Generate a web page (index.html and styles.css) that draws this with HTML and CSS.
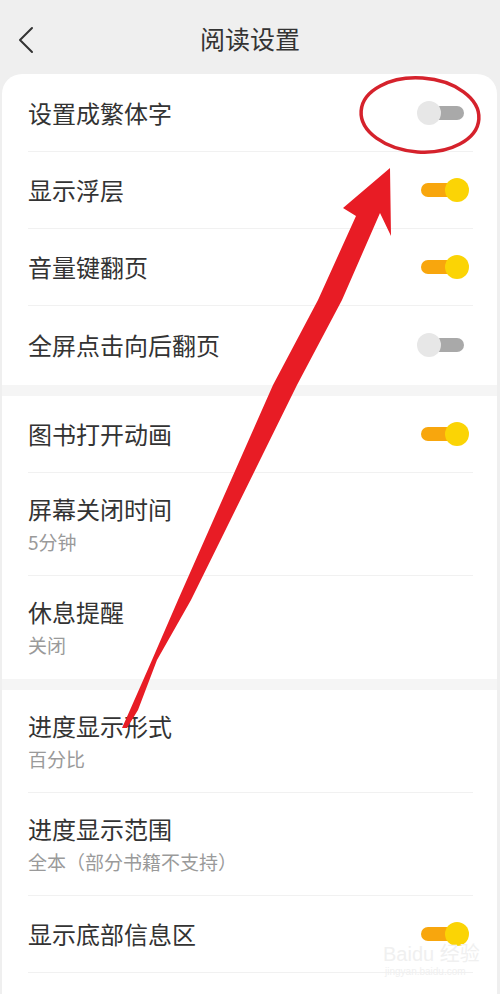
FILE: index.html
```html
<!DOCTYPE html>
<html lang="zh-CN">
<head>
    <meta charset="UTF-8">
    <meta name="viewport" content="width=device-width, initial-scale=1.0">
    <title>阅读设置</title>
    <link rel="stylesheet" href="styles.css">
</head>
<body>

    <div class="page">
        <!-- Top bar -->
        <header class="topbar">
            <span class="back">
                <svg width="16" height="28" viewBox="0 0 16 28">
                    <path d="M14 2 L2 14 L14 26" fill="none" stroke="#333" stroke-width="2" stroke-linecap="round" stroke-linejoin="round"/>
                </svg>
            </span>
            <h1 class="title">阅读设置</h1>
        </header>

        <!-- Group 1 -->
        <section class="group group-first">
            <div class="row">
                <span class="label">设置成繁体字</span>
                <span class="switch"></span>
            </div>
            <div class="row">
                <span class="label">显示浮层</span>
                <span class="switch on"></span>
            </div>
            <div class="row">
                <span class="label">音量键翻页</span>
                <span class="switch on"></span>
            </div>
            <div class="row row-last">
                <span class="label">全屏点击向后翻页</span>
                <span class="switch"></span>
            </div>
        </section>

        <!-- Group 2 -->
        <section class="group">
            <div class="row">
                <span class="label">图书打开动画</span>
                <span class="switch on"></span>
            </div>
            <div class="row row-double">
                <span class="label">屏幕关闭时间</span>
                <span class="sub">5分钟</span>
            </div>
            <div class="row row-double row-last">
                <span class="label">休息提醒</span>
                <span class="sub">关闭</span>
            </div>
        </section>

        <!-- Group 3 -->
        <section class="group group-fill">
            <div class="row row-double">
                <span class="label">进度显示形式</span>
                <span class="sub">百分比</span>
            </div>
            <div class="row row-double">
                <span class="label">进度显示范围</span>
                <span class="sub">全本（部分书籍不支持）</span>
            </div>
            <div class="row">
                <span class="label">显示底部信息区</span>
                <span class="switch on"></span>
            </div>
        </section>

        <!-- Red annotation drawn over the screenshot -->
        <svg class="annotation" width="500" height="994" viewBox="0 0 500 994">
            <ellipse cx="420" cy="115" rx="59" ry="37" transform="rotate(4 420 115)" fill="none" stroke="#d5222c" stroke-width="3.5"/>
            <polygon fill="#e81c25" points="390,168 391,236 380,213 342,300 297,385 191,600 157,660 138,710 127,728 122,728 130,710 152,660 178,600 273,385 318,300 356,216 343,208"/>
        </svg>

        <div class="watermark">
            <span class="wm-logo">Bai<span class="wm-paw">du</span> 经验</span>
            <span class="wm-url">jingyan.baidu.com</span>
        </div>
    </div>

</body>
</html>
```

FILE: styles.css
```css
body {
    margin: 0;
    padding: 0;
    font-family: "Noto Sans CJK SC", "Noto Sans", sans-serif;
    background-color: #efefef;
    color: #333333;
}

.page {
    position: relative;
    width: 500px;
    min-height: 994px;
    display: flex;
    flex-direction: column;
    overflow: hidden;
}

.topbar {
    height: 74px;
    display: flex;
    align-items: center;
    justify-content: center;
    position: relative;
}

.back {
    position: absolute;
    left: 18px;
    top: 26px;
    display: flex;
}

.title {
    margin: 0;
    font-size: 25px;
    font-weight: normal;
    color: #333333;
    line-height: 1;
    padding-top: 2px;
}

.group {
    background-color: #ffffff;
    margin: 0 3px 0 2px;
    border-top: 11px solid #f5f5f5;
}

.group-first {
    border-top: none;
    border-radius: 20px 20px 0 0;
    padding-top: 1px;
    padding-bottom: 2px;
}

.group-fill {
    flex: 1;
}

.row {
    height: 77px;
    margin: 0 24px 0 26px;
    box-sizing: border-box;
    display: flex;
    align-items: center;
    justify-content: space-between;
    border-bottom: 1px solid #f1f1f1;
}

.row-last {
    border-bottom: none;
}

.row-double {
    height: 103px;
    flex-direction: column;
    align-items: flex-start;
    justify-content: flex-start;
    padding-top: 21px;
}

.label {
    font-size: 24px;
    line-height: 30px;
    color: #333333;
}

.sub {
    font-size: 19px;
    line-height: 24px;
    color: #9a9a9a;
    margin-top: 6px;
}

/* toggle switch */
.switch {
    position: relative;
    width: 52px;
    height: 24px;
    margin-right: 4px;
}

.switch::before {
    content: "";
    position: absolute;
    left: 4px;
    top: 5px;
    width: 43px;
    height: 14px;
    border-radius: 7px;
    background-color: #a9a9a9;
}

.switch::after {
    content: "";
    position: absolute;
    left: 0;
    top: 0;
    width: 24px;
    height: 24px;
    border-radius: 50%;
    background-color: #e7e7e7;
}

.switch.on::before {
    background-color: #f8a60d;
}

.switch.on::after {
    left: 28px;
    background-color: #fbd405;
}

.annotation {
    position: absolute;
    left: 0;
    top: 0;
    pointer-events: none;
}

.watermark {
    position: absolute;
    left: 383px;
    top: 942px;
    display: flex;
    flex-direction: column;
    align-items: flex-start;
    color: #f0f0f0;
    font-family: "Liberation Sans", "Noto Sans CJK SC", sans-serif;
}

.wm-logo {
    font-size: 20px;
    line-height: 24px;
}

.wm-url {
    font-size: 10px;
    line-height: 12px;
    margin-left: 2px;
}
```
